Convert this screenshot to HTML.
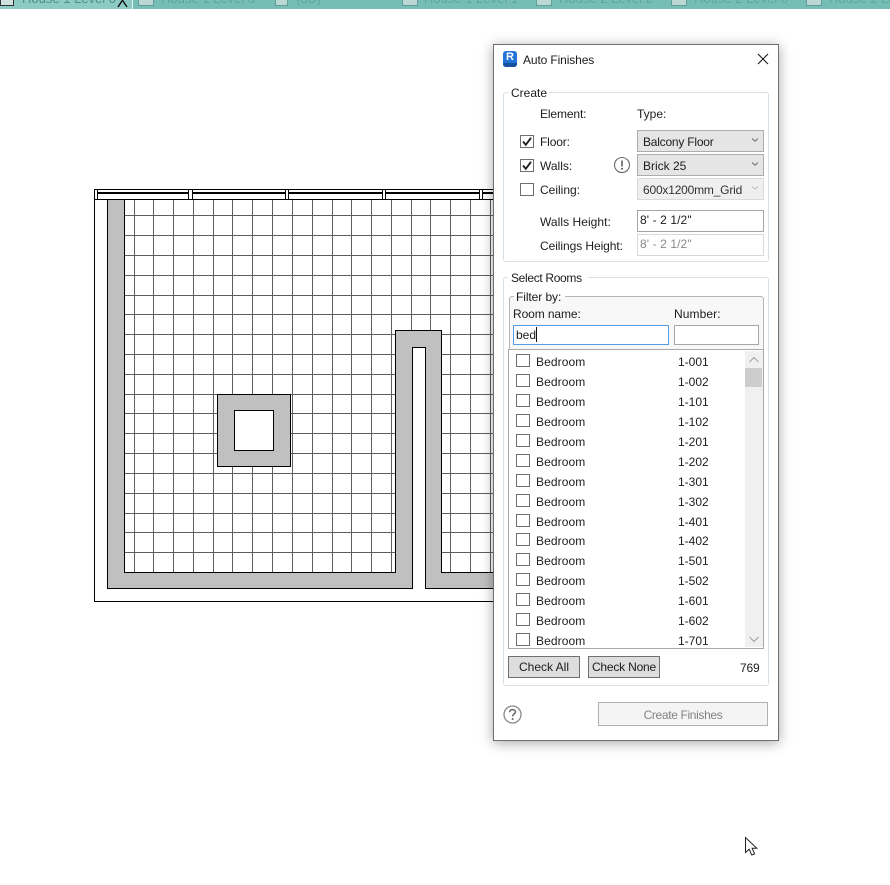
<!DOCTYPE html>
<html><head><meta charset="utf-8"><title>Auto Finishes</title>
<style>
html,body{margin:0;padding:0;background:#fff;width:890px;height:885px;overflow:hidden}
body{position:relative;font-family:"Liberation Sans",sans-serif;font-size:12px;color:#1c1c1c}
.a{position:absolute;box-sizing:border-box}
.t{position:absolute;height:16px;line-height:16px;white-space:nowrap}
.cb{position:absolute;box-sizing:border-box;width:14px;height:13px;border:1px solid #6e6e6e;background:#fff}
.tab{position:absolute;top:-9px;height:16px;line-height:16px;font-size:13px;color:#5fa69e;white-space:nowrap}
.ti{position:absolute;top:0;width:16px;height:6px;background:#bcd8d5;border:1px solid #5f9d97;border-top:0;box-sizing:border-box}
.combo{position:absolute;box-sizing:border-box;left:637px;width:127px;height:22px;background:#e5e5e5;border:1px solid #acacac}
.inp{position:absolute;box-sizing:border-box;background:#fff;border:1px solid #a6a6a6}
.btn{position:absolute;box-sizing:border-box;top:656px;width:72px;height:22px;background:#dddddd;border:1px solid #707070;text-align:center;line-height:21px}
</style></head><body>

<div class="a" style="left:0;top:0;width:890px;height:9px;background:#76bdb5;overflow:hidden">
  <div class="a" style="left:0;top:0;width:132px;height:9px;background:#8ccac3"></div>
  <div class="a" style="left:132px;top:0;width:1px;height:9px;background:#eaf5f3"></div>
  <div class="ti" style="left:0;width:14px;background:#cfe2e0;border-color:#333"></div>
  <div class="tab" style="left:22px;color:#4e8f88">House 1 Level 0</div>
  <svg class="a" style="left:117px;top:0" width="12" height="8"><path d="M1 7L5 1L6 0M10 7L6 1" stroke="#111" stroke-width="1.4" fill="none"/></svg>
  <div class="ti" style="left:138px"></div><div class="tab" style="left:161px">House 1 Level 3</div>
  <div class="ti" style="left:275px;width:13px"></div><div class="tab" style="left:296px">{3D}</div>
  <div class="ti" style="left:402px"></div><div class="tab" style="left:424px">House 1 Level 1</div>
  <div class="ti" style="left:536px"></div><div class="tab" style="left:559px">House 2 Level 2</div>
  <div class="ti" style="left:671px"></div><div class="tab" style="left:694px">House 2 Level 0</div>
  <div class="ti" style="left:806px"></div><div class="tab" style="left:829px">House 2 Level</div>
</div>

<svg class="a" style="left:0;top:0" width="890" height="885" shape-rendering="crispEdges">
  <g stroke="#5e5e5e" stroke-width="1" fill="none">
    <path d="M134.5 199V572M153.5 199V572M173.5 199V572M193.5 199V572M213.5 199V572M232.5 199V572M252.5 199V572M272.5 199V572M292.5 199V572M312.5 199V572M332.5 199V572M351.5 199V572M371.5 199V572M391.5 199V572M411.5 199V572M430.5 199V572M450.5 199V572M470.5 199V572M490.5 199V572"/>
    <path d="M124 215.5H500M124 235.5H500M124 255.5H500M124 275.5H500M124 295.5H500M124 314.5H500M124 334.5H500M124 354.5H500M124 374.5H500M124 394.5H500M124 413.5H500M124 433.5H500M124 453.5H500M124 473.5H500M124 493.5H500M124 513.5H500M124 532.5H500M124 552.5H500"/>
  </g>
  <rect x="412" y="347" width="14" height="242" fill="#fff"/>
  <path d="M107.5 199.5V588.5H412.5V347.5H425.5V588.5H510V572.5H441.5V330.5H395.5V572.5H124.5V199.5Z" fill="#c0c0c0" stroke="#000"/>
  <rect x="217.5" y="394.5" width="73" height="72" fill="#c0c0c0" stroke="#000"/>
  <rect x="234.5" y="410.5" width="39" height="40" fill="#fff" stroke="#000"/>
  <g stroke="#000" fill="none">
    <path d="M94.5 189.5V601.5H510"/>
    <path d="M94.5 189.5H510M94.5 199.5H510"/>
    <path d="M97 192.5H510M97 193.5H510"/>
  </g>
  <g fill="#fff" stroke="#000">
    <rect x="94.5" y="189.5" width="3" height="10"/>
    <rect x="188.5" y="189.5" width="4" height="10"/>
    <rect x="285.5" y="189.5" width="3" height="10"/>
    <rect x="382.5" y="189.5" width="3" height="10"/>
    <rect x="479.5" y="189.5" width="3" height="10"/>
  </g>
</svg>

<!-- Cursor -->
<svg class="a" style="left:744px;top:836px" width="16" height="22"><path d="M1.5 1.5V16.5L5.2 13.2L7.7 19L10.6 17.8L8.1 12.2H12.8Z" fill="#fff" stroke="#222" stroke-width="1"/></svg>

<!-- Dialog -->
<div class="a" style="left:493px;top:44px;width:286px;height:697px;background:#fff;border:1px solid #6f6f6f;box-shadow:0 2px 12px rgba(0,0,0,.35)"></div>

<!-- R icon -->
<div class="a" style="left:503px;top:51px;width:14px;height:16px;background:#2274d8;border-radius:3px"></div>
<div class="a" style="left:503px;top:63px;width:14px;height:4px;background:#17509f;border-radius:0 0 3px 3px"></div>
<div class="t" style="left:503px;top:49px;width:14px;text-align:center;color:#fff;font-weight:bold;font-size:11px">R</div>
<div class="t" style="left:523px;top:52px;letter-spacing:-.12px">Auto Finishes</div>
<svg class="a" style="left:757px;top:53px" width="12" height="12"><path d="M1 1L11 11M11 1L1 11" stroke="#1a1a1a" stroke-width="1.1" fill="none"/></svg>

<!-- Create group -->
<div class="a" style="left:503px;top:92px;width:266px;height:170px;border:1px solid #d5dfe5;border-radius:3px"></div>
<div class="a" style="left:508px;top:88px;width:41px;height:10px;background:#fff"></div>
<div class="t" style="left:511px;top:85px">Create</div>
<div class="t" style="left:540px;top:106px;letter-spacing:-.12px">Element:</div>
<div class="t" style="left:637px;top:106px">Type:</div>

<div class="cb" style="left:520px;top:135px"></div>
<svg class="a" style="left:520px;top:135px" width="14" height="13"><path d="M3 6.5L5.8 9.8L11 2.8" stroke="#222" stroke-width="1.9" fill="none"/></svg>
<div class="t" style="left:540px;top:134px;letter-spacing:-.15px">Floor:</div>
<div class="cb" style="left:520px;top:159px"></div>
<svg class="a" style="left:520px;top:159px" width="14" height="13"><path d="M3 6.5L5.8 9.8L11 2.8" stroke="#222" stroke-width="1.9" fill="none"/></svg>
<div class="t" style="left:540px;top:158px">Walls:</div>
<div class="cb" style="left:520px;top:183px"></div>
<div class="t" style="left:540px;top:182px">Ceiling:</div>

<svg class="a" style="left:613px;top:156px" width="18" height="18"><circle cx="9" cy="9" r="7.5" fill="#fff" stroke="#6b6b6b" stroke-width="1.1"/><path d="M9 4.5V10.5" stroke="#555" stroke-width="1.5"/><circle cx="9" cy="12.8" r="1" fill="#555"/></svg>

<div class="combo" style="top:130px"></div>
<div class="t" style="left:643px;top:134px;letter-spacing:-.22px">Balcony Floor</div>
<svg class="a" style="left:751px;top:137px" width="8" height="6"><path d="M1 1.5L4 4.2L7 1.5" stroke="#666" fill="none"/></svg>
<div class="combo" style="top:154px"></div>
<div class="t" style="left:643px;top:158px">Brick 25</div>
<svg class="a" style="left:751px;top:161px" width="8" height="6"><path d="M1 1.5L4 4.2L7 1.5" stroke="#666" fill="none"/></svg>
<div class="combo" style="top:178px;background:#efefef;border-color:#d9d9d9"></div>
<div class="t" style="left:643px;top:182px;color:#333;letter-spacing:-.2px">600x1200mm_Grid</div>
<svg class="a" style="left:751px;top:185px" width="8" height="6"><path d="M1 1.5L4 4.2L7 1.5" stroke="#bbb" fill="none"/></svg>

<div class="t" style="left:540px;top:214px;letter-spacing:.05px">Walls Height:</div>
<div class="inp" style="left:637px;top:210px;width:127px;height:22px"></div>
<div class="t" style="left:640px;top:212px;letter-spacing:.1px">8' - 2 1/2"</div>
<div class="t" style="left:540px;top:238px;letter-spacing:-.07px">Ceilings Height:</div>
<div class="inp" style="left:637px;top:234px;width:127px;height:22px;border-color:#d9d9d9"></div>
<div class="t" style="left:640px;top:236px;color:#8a8a8a;letter-spacing:.1px">8' - 2 1/2"</div>

<!-- Select Rooms group -->
<div class="a" style="left:503px;top:277px;width:266px;height:409px;border:1px solid #d5dfe5;border-radius:3px"></div>
<div class="a" style="left:508px;top:273px;width:80px;height:10px;background:#fff"></div>
<div class="t" style="left:511px;top:270px;letter-spacing:-.33px">Select Rooms</div>

<div class="a" style="left:509px;top:296px;width:255px;height:54px;border:1px solid #b5b5b5;border-bottom:0;border-radius:3px 3px 0 0;background:#f8f8f8"></div>
<div class="a" style="left:514px;top:292px;width:51px;height:9px;background:#fff"></div>
<div class="a" style="left:514px;top:297px;width:51px;height:4px;background:#f8f8f8"></div>
<div class="t" style="left:516px;top:289px;letter-spacing:-.08px">Filter by:</div>
<div class="t" style="left:513px;top:306px;letter-spacing:-.1px">Room name:</div>
<div class="t" style="left:674px;top:306px;letter-spacing:.1px">Number:</div>
<div class="inp" style="left:513px;top:325px;width:156px;height:20px;border-color:#569de5"></div>
<div class="t" style="left:516px;top:327px">bed</div>
<div class="a" style="left:536px;top:327px;width:1px;height:15px;background:#111"></div>
<div class="inp" style="left:674px;top:325px;width:85px;height:20px"></div>

<div class="a" style="left:508px;top:349px;width:256px;height:300px;background:#fff;border:1px solid #a8a8a8"></div>
<div class="a" style="left:745px;top:351px;width:18px;height:296px;background:#f0f0f0"></div>
<div class="a" style="left:745px;top:368px;width:17px;height:19px;background:#cdcdcd"></div>
<svg class="a" style="left:748px;top:355px" width="12" height="9"><path d="M1.5 7L6 2.5L10.5 7" stroke="#a6a6a6" stroke-width="1.2" fill="none"/></svg>
<svg class="a" style="left:748px;top:635px" width="12" height="9"><path d="M1.5 2L6 6.5L10.5 2" stroke="#a6a6a6" stroke-width="1.2" fill="none"/></svg>

<div class="cb" style="left:516px;top:354px"></div><div class="t" style="left:536px;top:354px;letter-spacing:.1px">Bedroom</div><div class="t" style="left:678px;top:354px">1-001</div>
<div class="cb" style="left:516px;top:374px"></div><div class="t" style="left:536px;top:374px;letter-spacing:.1px">Bedroom</div><div class="t" style="left:678px;top:374px">1-002</div>
<div class="cb" style="left:516px;top:394px"></div><div class="t" style="left:536px;top:394px;letter-spacing:.1px">Bedroom</div><div class="t" style="left:678px;top:394px">1-101</div>
<div class="cb" style="left:516px;top:414px"></div><div class="t" style="left:536px;top:414px;letter-spacing:.1px">Bedroom</div><div class="t" style="left:678px;top:414px">1-102</div>
<div class="cb" style="left:516px;top:434px"></div><div class="t" style="left:536px;top:434px;letter-spacing:.1px">Bedroom</div><div class="t" style="left:678px;top:434px">1-201</div>
<div class="cb" style="left:516px;top:454px"></div><div class="t" style="left:536px;top:454px;letter-spacing:.1px">Bedroom</div><div class="t" style="left:678px;top:454px">1-202</div>
<div class="cb" style="left:516px;top:474px"></div><div class="t" style="left:536px;top:474px;letter-spacing:.1px">Bedroom</div><div class="t" style="left:678px;top:474px">1-301</div>
<div class="cb" style="left:516px;top:494px"></div><div class="t" style="left:536px;top:494px;letter-spacing:.1px">Bedroom</div><div class="t" style="left:678px;top:494px">1-302</div>
<div class="cb" style="left:516px;top:514px"></div><div class="t" style="left:536px;top:514px;letter-spacing:.1px">Bedroom</div><div class="t" style="left:678px;top:514px">1-401</div>
<div class="cb" style="left:516px;top:533px"></div><div class="t" style="left:536px;top:533px;letter-spacing:.1px">Bedroom</div><div class="t" style="left:678px;top:533px">1-402</div>
<div class="cb" style="left:516px;top:553px"></div><div class="t" style="left:536px;top:553px;letter-spacing:.1px">Bedroom</div><div class="t" style="left:678px;top:553px">1-501</div>
<div class="cb" style="left:516px;top:573px"></div><div class="t" style="left:536px;top:573px;letter-spacing:.1px">Bedroom</div><div class="t" style="left:678px;top:573px">1-502</div>
<div class="cb" style="left:516px;top:593px"></div><div class="t" style="left:536px;top:593px;letter-spacing:.1px">Bedroom</div><div class="t" style="left:678px;top:593px">1-601</div>
<div class="cb" style="left:516px;top:613px"></div><div class="t" style="left:536px;top:613px;letter-spacing:.1px">Bedroom</div><div class="t" style="left:678px;top:613px">1-602</div>
<div class="cb" style="left:516px;top:633px"></div><div class="t" style="left:536px;top:633px;letter-spacing:.1px">Bedroom</div><div class="t" style="left:678px;top:633px">1-701</div>

<div class="btn" style="left:508px">Check All</div>
<div class="btn" style="left:588px;letter-spacing:-.2px">Check None</div>
<div class="t" style="left:740px;top:660px;letter-spacing:-.2px">769</div>

<svg class="a" style="left:502px;top:704px" width="21" height="21"><circle cx="10.5" cy="10.5" r="8.5" fill="#fff" stroke="#8a8a8a" stroke-width="1.3"/><path d="M7.6 8.2C7.8 6.4 9 5.6 10.5 5.6C12.2 5.6 13.4 6.6 13.4 8C13.4 10 10.6 10 10.6 12.4" stroke="#666" stroke-width="1.5" fill="none"/><circle cx="10.6" cy="15" r="1" fill="#666"/></svg>
<div class="a" style="left:598px;top:702px;width:170px;height:24px;background:#f4f4f4;border:1px solid #adb2b5;text-align:center;line-height:24px;color:#838383;letter-spacing:-.35px">Create Finishes</div>

</body></html>
